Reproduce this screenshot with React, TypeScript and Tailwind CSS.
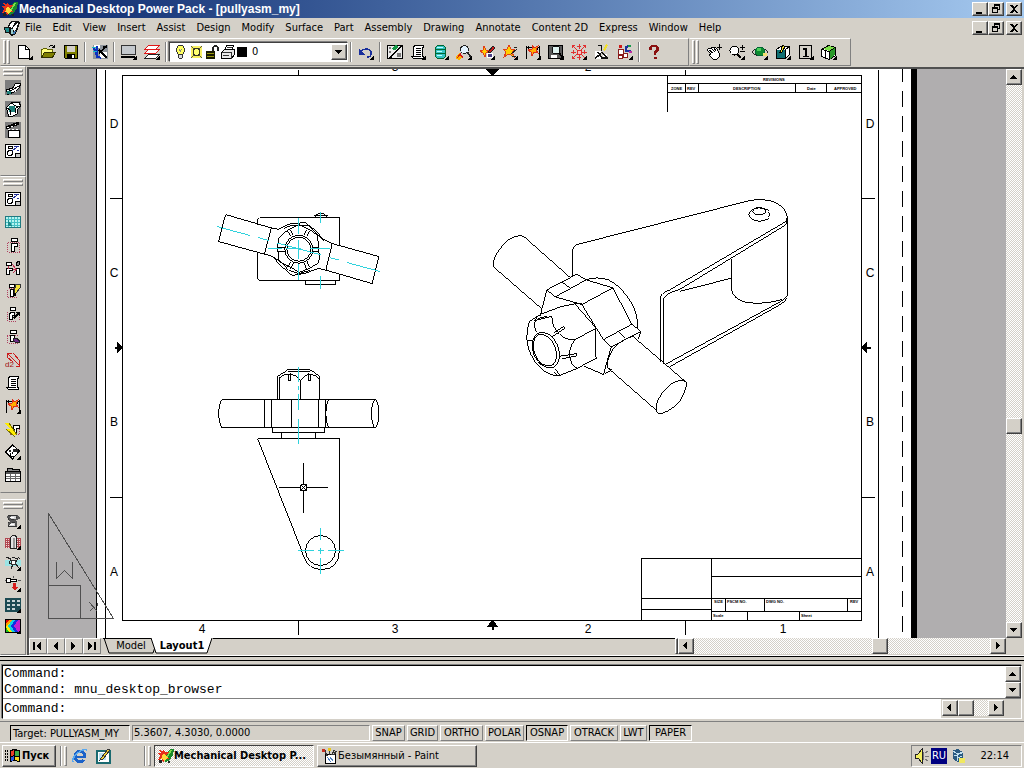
import type { ReactNode } from 'react';
import clsx from 'clsx';

const raised =
  'border border-t-white border-l-white border-r-[#404040] border-b-[#404040] bg-[#d4d0c8] shadow-[inset_-1px_-1px_#808080]';
const sunken = 'border border-t-[#808080] border-l-[#808080] border-r-white border-b-white';
const dither = 'bg-[repeating-conic-gradient(#ffffff_0_25%,#d4d0c8_0_50%)] bg-[length:2px_2px]';

// 16x16 toolbar glyphs
const glyphs: Record<string, ReactNode> = {
  app: (
    <>
      <path d="M8 6l4-5h4l-1 6-4 6-4 1z" fill="#1a8a2a" />
      <path d="M12 2l2 0-4 7-2 1z" fill="#7ce04a" />
      <path d="M1 2l3 1 2-2 1 3 4 0-3 3 3 4-4-1-2 5-1-4-4 1 2-4-2-3 3 0z" fill="#e8301a" />
      <path d="M5 6l2 0 1 2 2 1-2 2-1 3-2-3-2 0 1-2z" fill="#ffd83a" />
      <path d="M1 12h3v3h-3zM10 13h2v2h-2z" fill="#222" />
    </>
  ),
  doc: (
    <>
      <path d="M0 7h4l1-4 3-2h6l2 2-2 6-3 6-4 1-3-3H1z" fill="#111" />
      <path d="M1 8h4v4H2z" fill="#1f8a8a" />
      <path d="M5 7l3-5h3L8 8zM9 8l4-5h1l-2 7-2 1z" fill="#fff" />
      <path d="M7 9h2v5H7z" fill="#9ad0d0" />
      <path d="M10 11l2 0-1 3-2 0z" fill="#3f78b0" />
    </>
  ),
  fresh: (
    <>
      <path d="M1.5 1.5h7l4 4v9h-11z" fill="#fff" stroke="#000" />
      <path d="M8.5 1.5v4h4" fill="none" stroke="#000" />
    </>
  ),
  open: (
    <>
      <path d="M1.5 13.5v-8h1l1-1h3l1 1h5v2" fill="#ffff80" stroke="#606000" />
      <path d="M1.5 13.5l3-5h11l-3 5z" fill="#808000" stroke="#303000" />
      <path d="M8.5 3.5l2-2h2l2 2M14.5 1v3M12 3.5h3" fill="none" stroke="#000" />
    </>
  ),
  save: (
    <>
      <path d="M1.5 1.5h13v13h-12l-1-1z" fill="#808000" stroke="#000" />
      <path d="M4 2h8v6H4z" fill="#d4d0c8" />
      <path d="M4 10h8v4H4z" fill="#000" />
      <path d="M9 11h2v3H9z" fill="#fff" />
    </>
  ),
  snapcut: (
    <>
      <path d="M1 1h15v14H1z" fill="#8f959c" />
      <path d="M2 1h6v3H2zM8 8h7v6H8z" fill="#fff" />
      <path d="M4.5 2v12M2 4l3 8 4 2" fill="none" stroke="#0b2fbf" strokeWidth="2" />
      <path d="M15 2L7 9M7 6l8 8M11 3h4" fill="none" stroke="#000" strokeWidth="1.5" />
      <path d="M0 3.5h4M1 7.5h4" stroke="#14b8c8" />
    </>
  ),
  screen: (
    <>
      <path d="M.5 1.5h14v9H.5z" fill="#c4c8cc" stroke="#333" />
      <path d="M0 12h14v2H0z" fill="#000" />
    </>
  ),
  layers: (
    <>
      <path d="M0.5 14.5l4-4h11l-4 4z" fill="#fff" stroke="#222" />
      <path d="M0.5 9.5l4-4h11l-4 4z" fill="#fff" stroke="#e01818" />
      <path d="M0.5 5.5l4-4h11l-4 4z" fill="#fff" stroke="#e01818" />
    </>
  ),
  undo: (
    <>
      <path d="M3 7.5C7 3 13 5 13 9s-2 4-4 4" fill="none" stroke="#1a2f9c" strokeWidth="1.5" />
      <path d="M1 5v6h6z" fill="#1a2f9c" />
    </>
  ),
  sketch: (
    <>
      <path d="M.5 1.5h15v13H.5z" fill="#ececec" stroke="#000" />
      <path d="M15 1L4 13l-2 1" stroke="#000" strokeWidth="1.5" />
      <path d="M4 5l5-4 3 2-4 3z" fill="#159a48" />
      <path d="M2 3h2v2H2zM2 7h2v2H2zM10 9h4v4h-4z" fill="#777" />
    </>
  ),
  scroll: (
    <>
      <path d="M4.5 1.5h9v2h-1v9h1v2h-10l-2-2h2v-9z" fill="#fff" stroke="#000" />
      <path d="M6 4.5h5M6 6.5h5M6 8.5h5M6 10.5h5M4 12.5h7" stroke="#000" />
    </>
  ),
  data: (
    <>
      <path d="M2.5 3.5l2-2h6l2 2v9l-2 2h-6l-2-2z" fill="#35c4c4" stroke="#063" />
      <path d="M3 5.5h9M3 9.5h9" stroke="#063" />
      <path d="M4 3.5h6M4 7.5h5M4 11.5h5" stroke="#b8ffff" />
    </>
  ),
  find: (
    <>
      <path d="M0 12l4-3 1 3 4 1-4 1-1 2-4-1z" fill="#ffb000" />
      <path d="M1 14l4-5M4 10l3 4" stroke="#d01818" />
      <circle cx="8.5" cy="5.500" r="4" fill="#e4f4ff" stroke="#222" />
      <path d="M11 8l4 5" stroke="#222" strokeWidth="2" />
    </>
  ),
  sparkle: (
    <>
      <path d="M1 7l3-1 1-4 2 4 3 1-3 2-1 4-2-4z" fill="#ffd000" stroke="#e04018" />
      <path d="M9 8l5-6 2 2-5 5z" fill="#d01818" stroke="#222" />
      <path d="M8 9h5v4H8z" fill="#4a3f86" stroke="#fff" />
    </>
  ),
  star: (
    <>
      <path d="M1 5h4l2-4 2 4h4l-3 3 2 5-5-3-5 3 2-5z" fill="#ffd000" stroke="#e04018" />
      <path d="M9 10l6-5M10 12h4M12 3h3" stroke="#222" />
    </>
  ),
  dim: (
    <>
      <path d="M1.5 2v13M14.5 2v11M2 3.5h13M3.5 1.5v4M12.5 1.5v4" stroke="#000" fill="none" />
      <path d="M3 6l4-1 0-4 2 3 4-2-2 4 2 3-4-1-2 4-1-4z" fill="#ffae00" stroke="#e03018" />
    </>
  ),
  plot: (
    <>
      <path d="M.5 1.5h14v13H.5z" fill="#5a5a5a" stroke="#000" />
      <circle cx="8" cy="6" r="4" fill="#dff3f0" stroke="#111" />
      <path d="M3 11h6v3H3z" fill="#fff" />
      <path d="M11 9l4 5" stroke="#000" strokeWidth="2" />
    </>
  ),
  burst: (
    <>
      <path
        d="M8.5 0v5M8.500 11v5M0 8.5h5M11 8.5h5M2 2l4 4M10 10l4 4M14 2l-4 4M6 10l-4 4M6 2.5h4M6 13.5h4M2.5 6v4M13.5 6v4M1 1.5h3M1.5 1v3M12 1.5h3M14.5 1v3M1 14.5h3M1.5 12v3"
        stroke="#e03030"
        fill="none"
      />
      <path d="M6 6h4v4H6z" fill="#f8c0c0" stroke="#e03030" />
    </>
  ),
  axes: (
    <>
      <path d="M1 7h6v8H1zM9 10h4v4H9z" fill="#fff" />
      <path d="M3.5 1.5h4v5M1 14.500l6-5M8 8l5 6H8L4 8" fill="none" stroke="#111" strokeWidth="1.5" />
      <path d="M9 6l3-6 2 1-3 6z" fill="#f0e030" />
    </>
  ),
  blocks: (
    <>
      <path d="M1.5 5.5h5v5h-5zM6.5 9.5h4v4h-4zM1.5 11.5h4v3h-4z" fill="#fff" stroke="#8a1c1c" />
      <path d="M2 1h3v3H2z" fill="#d01818" />
      <path d="M8 5l3-3M9 7h5M9 2v6" stroke="#1a2f9c" strokeWidth="1.5" />
      <path d="M11 1h3v2h-3z" fill="#159a48" />
      <path d="M12 7h3v2h-3z" fill="#c02aa0" />
    </>
  ),
  help: (
    <>
      <path d="M4.5 6V3.5L6 2h4l1.5 1.5v3L9 8.5V11" fill="none" stroke="#8a1010" strokeWidth="2.5" />
      <path d="M7.5 12.5h3V15h-3z" fill="#8a1010" />
    </>
  ),
  pan: (
    <>
      <path d="M1 6l2-2 2 1 1-2 2 1 1-1 2 2 2 4v4l-2 2H7L3 11l2-1z" fill="#fff" stroke="#000" />
      <path d="M3 6l4 3M5 4l4 4M8 4l2 3" stroke="#000" fill="none" />
      <path d="M13.5 0v6M11 3.5h5" stroke="#000" />
    </>
  ),
  zoom: (
    <>
      <circle cx="5.5" cy="6.5" r="4.500" fill="#fff" stroke="#000" />
      <path d="M8 10l4 4" stroke="#000" strokeWidth="2" />
      <path d="M11 3.5h5M13.5 1v5M11 7.5h5" stroke="#000" />
    </>
  ),
  orbit: (
    <>
      <ellipse cx="8" cy="8" rx="7.5" ry="3.5" fill="none" stroke="#222" />
      <circle cx="8" cy="7.5" r="4.5" fill="#0d8a30" stroke="#063" />
      <path d="M5 4h4v3H5z" fill="#4ad05a" />
      <path d="M11 9h4v3h-4z" fill="#f0e070" />
    </>
  ),
  view3d: (
    <>
      <path d="M1.5 5.5l4-3h9v8l-4 4h-9z" fill="#fff" stroke="#000" />
      <path d="M2 6h8v8H2z" fill="#0f6f72" />
      <path d="M10.5 5.5v9M10.5 5.5l4-3" stroke="#000" />
      <path d="M5 8l3-7 2 2-3 5z" fill="#f0e030" stroke="#000" />
    </>
  ),
  one: (
    <>
      <path d="M1.5 1.5h12v13h-12z" fill="#d4d0c8" stroke="#000" />
      <path d="M5 4h4v8h2v1H5v-1h2V6H5z" fill="#000" />
    </>
  ),
  cube: (
    <>
      <path d="M.5 5.5l7-4 7 2v8l-6 4-8-3z" fill="#fff" stroke="#000" />
      <path d="M2 5l6-3 6 2-5 3z" fill="#7cdf4a" />
      <path d="M9 7l5-3v7l-5 4z" fill="#2a9a2a" />
      <path d="M8.5 7.5v8M1 5.5l7 2 6-4M4.500 7v7" stroke="#000" fill="none" />
    </>
  ),
  part: (
    <>
      <path d="M0 0h16v15H0z" fill="#7d7d7d" />
      <path d="M1.5 9.5l6-1 3-5h5l-1 4-4 4-8 3z" fill="#fff" stroke="#000" />
      <path d="M2 11h4v3H2z" fill="#1f7f78" />
      <path d="M7 10l7-4M2 9l5 2" stroke="#000" />
    </>
  ),
  assy: (
    <>
      <path d="M0 0h16v16H0z" fill="#7d7d7d" />
      <path d="M1.5 6.5l5-5h8l1 4-3 3v4l-5 3h-4z" fill="#fff" stroke="#000" />
      <path d="M4 5h6v6H4z" fill="#1f7f78" />
      <path d="M2 7l3 2v5M6 2l5 3h4M10 12V8l4-3" stroke="#000" fill="none" />
    </>
  ),
  scene: (
    <>
      <path d="M0 0h16v16H0z" fill="#7d7d7d" />
      <path d="M3.5 8.5h11v7h-11z" fill="#fff" stroke="#000" />
      <path d="M1 6l13-5" stroke="#000" strokeWidth="3" />
      <path d="M2 6l11-4M3 7.5h12" stroke="#fff" strokeDasharray="2 2" />
    </>
  ),
  drawing: (
    <>
      <path d="M.5 1.5h15v13H.5z" fill="#fff" stroke="#000" />
      <path d="M3.500 3.5h4v2h-4z" fill="none" stroke="#000" />
      <circle cx="5" cy="10" r="2.5" fill="none" stroke="#000" />
      <path d="M7 8l5-4M9 3.5h5M12 7.5h2" stroke="#22309a" />
      <path d="M10.5 10.5h5v4h-5z" fill="#c8c8c8" stroke="#000" />
    </>
  ),
  grid: (
    <>
      <path d="M.5 2.5h15v11H.5z" fill="#b8f4f0" stroke="#207a80" />
      <path d="M3.5 3v10M6.5 3v10M9.5 3v10M12.5 3v10M1 5.5h14M1 8.5h14M1 11.5h14" stroke="#46c0c4" />
      <path d="M3 5v7h4z" fill="#1f8a8a" />
    </>
  ),
  view: (
    <>
      <path d="M2.5 6v9h9M14.5 6v9M3 5.5h12M12 15.5h3" stroke="#b04060" strokeDasharray="1 1" fill="none" />
      <path d="M6.5 1.5h6v3h-6z" fill="#fff" stroke="#000" />
      <path d="M6.5 6.5h6v3h-3v5h-3z" fill="#fff" stroke="#000" />
    </>
  ),
  link: (
    <>
      <path d="M1.5 2.5h5v3h-5zM1.5 8.5h6v2h-3v4h-3zM11.5 8.5h3v6h-3z" fill="#fff" stroke="#000" />
      <path d="M7 4l4 5M4 6l-1 3M8 9h4M8 13l3-3" stroke="#c03050" />
      <path d="M11 4l2-3h2l-1 4h-3z" fill="#888" stroke="#000" />
    </>
  ),
  edit: (
    <>
      <path d="M2.500 7v8M4 5.5h10M3 14.5h10" stroke="#b04060" strokeDasharray="1 1" />
      <path d="M4.5 1.5h5v3h-5zM5.5 6.5h3v7h-3z" fill="#fff" stroke="#000" />
      <path d="M11 1h4v4l-4 5-2 2 0-4z" fill="#f2e23a" stroke="#333" />
      <path d="M9 10h2v3H9z" fill="#000" />
    </>
  ),
  move: (
    <>
      <path d="M2.5 6v9h9M14.5 7v8" stroke="#b04060" strokeDasharray="1 1" fill="none" />
      <path d="M5.5 1.5h5v3h-5zM5.5 6.5h4v3h-2v4h-3v-5z" fill="#fff" stroke="#000" />
      <path d="M8 11l4-4-2-1h5v5l-2-2-4 4z" fill="#000" />
    </>
  ),
  erase: (
    <>
      <path d="M2 6.5h12M2.5 7v7M4 14.5h9" stroke="#b04060" strokeDasharray="1 1" />
      <path d="M5.5 1.5h6v3h-6zM5.5 6.5h4v6h-4z" fill="#fff" stroke="#000" />
      <path d="M8 9h4l3 4-3 1-4-2z" fill="#6a2a86" stroke="#222" />
    </>
  ),
  d2: (
    <>
      <path d="M3 2l11 11M2.500 5V1.500h4M14.500 9v5h-4M8 1l7 8M2 5l6 5" stroke="#cc1c1c" fill="none" />
      <text x="0" y="15" fontSize="8" fill="#a01010" fontFamily="Liberation Sans, sans-serif">
        d2
      </text>
    </>
  ),
  flash: (
    <>
      <path d="M4 5.5h11M14.5 6v8M5 13.5h9" stroke="#b04060" strokeDasharray="1 1" />
      <path d="M8.5 4.5h6v3h-3v4h-2z" fill="#fff" stroke="#000" />
      <path d="M0 2h4l8 12H9l1 2-9-8h4z" fill="#ffec00" />
      <path d="M4 2l8 12M1 8l9 8" stroke="#7a7000" fill="none" />
    </>
  ),
  tag: (
    <>
      <path d="M7.5 1l7 6-7 8-7-7z" fill="#fff" stroke="#000" />
      <path d="M4 6h2v2H4zM8 5h5v3H8z" fill="#222" />
      <path d="M5 9l1 3h3M8 8l-1 2" stroke="#000" fill="none" />
    </>
  ),
  table: (
    <>
      <path d="M2 1.5h5l1 1h6v3H2z" fill="#888" stroke="#000" />
      <path d="M.5 4.5h15v10H.5z" fill="#fff" stroke="#000" />
      <path d="M1 5h14v2H1z" fill="#555" />
      <path d="M1 9.5h14M1 11.5h14M5.5 7v7M10.5 7v7" stroke="#666" />
    </>
  ),
  spring: (
    <>
      <path d="M3.5 2.5h8v4h-8zM3.5 9.5h8v4h-8z" fill="#d8d8d8" stroke="#333" />
      <path d="M2 4h3v3l6 2v4M12 3l2 2-8 4-3 3" stroke="#555" fill="none" strokeWidth="1.5" />
      <path d="M5 4.500h4M5 11.500h4" stroke="#fff" />
    </>
  ),
  shaft: (
    <>
      <path d="M0 4h5v10H0zM11 4h5v10h-5z" fill="#b04850" />
      <path d="M1.500 5v9M3.500 5v9M12.500 5v9M14.500 5v9" stroke="#f0d8d8" strokeDasharray="1 1" />
      <path d="M5.5 3.5l2-2h3l1 2v11h-6z" fill="#e4e4e4" stroke="#222" />
      <path d="M8.5 4v10" stroke="#999" strokeWidth="2" />
    </>
  ),
  spline: (
    <>
      <path d="M0 5h16v6H0z" fill="#9ce4e4" />
      <path d="M1 2l5 2-2 4 4 1-2 5M7 2l6 2-3 4 4 5M13 2l2 2" stroke="#222" fill="none" />
      <path d="M6 5h4v4H6z" fill="#fff" stroke="#333" />
    </>
  ),
  screw: (
    <>
      <path d="M1.5 2.5h4v4h-4z" fill="#fff" stroke="#000" />
      <path d="M5.500 3.5h6v2h-6z" fill="#fff" stroke="#000" />
      <path d="M0 4.5h1M13 4.5h3M8.500 0v2" stroke="#555" />
      <path d="M8 7h3v4h2l-3 4-4-4h2z" fill="#d81c1c" />
    </>
  ),
  keys: (
    <>
      <path d="M0 1h16v14H0z" fill="#1c4a52" />
      <path d="M2 3h3v2H2zM7 3h3v2H7zM12 3h3v2h-3zM2 7h3v2H2zM7 7h3v2H7zM12 7h3v2h-3zM2 11h3v2H2zM7 11h3v2H7z" fill="#c8d4d4" />
    </>
  ),
  colors: (
    <>
      <path d="M0 1h16v14H0z" fill="#000" />
      <path d="M1 2h3L1 6z" fill="#e00000" />
      <path d="M4 2h3L1 9V6z" fill="#ff9c00" />
      <path d="M1 9l3-4 0 9H1z" fill="#20c020" />
      <path d="M7 2L3 8l4 6H4L1 9z" fill="#ffee00" />
      <path d="M10 2L6 8l4 6H7L3 8l4-6z" fill="#10d0e0" />
      <path d="M13 2L9 8l4 6h-3L6 8l4-6z" fill="#1030e0" />
      <path d="M15 2v12h-2L9 8l4-6z" fill="#c020d0" />
    </>
  ),
  bulb: (
    <>
      <path d="M4.500 4.500l2-3h4l2 3v3l-2 3h-4l-2-3z" fill="#ffff60" stroke="#333" />
      <path d="M6.5 10.5h4v3l-1 1h-2l-1-1z" fill="#ddd" stroke="#333" />
      <path d="M7 5l1.500 2L10 5" stroke="#887" fill="none" />
    </>
  ),
  sun: (
    <>
      <path d="M3 2h11v12H3z" fill="#f8f060" />
      <path d="M3 2l3 3M14 2l-3 3M3 14l3-3M14 14l-3-3" stroke="#554" />
      <circle cx="8.500" cy="8" r="3.500" fill="#ffff70" stroke="#332" />
    </>
  ),
  lock: (
    <>
      <path d="M9 7V3.5l2-2h1l2 2V7" fill="none" stroke="#222" strokeWidth="2" />
      <path d="M2 7h9v8H2z" fill="#1a1a00" />
      <path d="M3 9.5h7M3 12.5h7" stroke="#9a9a10" />
    </>
  ),
  print: (
    <>
      <path d="M4.5 6.5l2-5h7l-2 5z" fill="#fff" stroke="#000" />
      <path d="M1.5 8.5l3-3h10v5l-3 4h-10z" fill="#e8e8e8" stroke="#000" />
      <path d="M2 8.5h9v6M3 11.5h6M7 3.5h5" stroke="#333" fill="none" />
    </>
  ),
  ie: (
    <>
      <circle cx="8" cy="8.5" r="5" fill="none" stroke="#1c62c8" strokeWidth="3" />
      <path d="M4 8.5h9" stroke="#1c62c8" strokeWidth="2" />
      <path d="M11 10h5v2h-5z" fill="#d4d0c8" />
      <path d="M1 14C-1 10 9 0 15 2" fill="none" stroke="#58a8f0" strokeWidth="1.5" />
    </>
  ),
  desk: (
    <>
      <path d="M1.5 2.5h13v12h-13z" fill="#fff" stroke="#1a6a70" strokeWidth="2" />
      <path d="M4 5h7v7H4z" fill="#b8e0f0" />
      <path d="M6 10l7-9 2 1-7 9-3 1z" fill="#f0d030" stroke="#333" />
    </>
  ),
  flag: (
    <>
      <path d="M0 3h4M0 6h4M0 9h4M0 12h4" stroke="#000" strokeDasharray="1 1" strokeWidth="2" />
      <path d="M5 2l4-1 6 1v12l-6-1-4 1z" fill="#000" />
      <path d="M6 3l3-1v5L6 8z" fill="#e8402a" />
      <path d="M10 3l4 0v5h-4z" fill="#38b048" />
      <path d="M6 9l3-1v4l-3 1z" fill="#2a5ae0" />
      <path d="M10 9h4v4l-4-1z" fill="#f4d820" />
    </>
  ),
  paint: (
    <>
      <path d="M4.5 6.5h10v9h-10z" fill="#fff" stroke="#000" />
      <path d="M2 2l2 1 2 5M8.500 1v6M13 2l-2 5M15 3l-2 4" stroke="#333" fill="none" strokeWidth="1.5" />
      <path d="M1 1h3v3H1z" fill="#c83020" />
      <path d="M7 0h3v3H7z" fill="#e8c820" />
      <path d="M6 9l4 5M9 9l3 4" stroke="#5080c0" />
    </>
  ),
  sound: (
    <>
      <path d="M1 6h3l4-5v14L4 10H1z" fill="#f4f060" stroke="#222" />
      <path d="M11 5l3-2M11 8.500h4M11 11l3 2M9.500 4v8" stroke="#777" />
    </>
  ),
  tray: (
    <>
      <path d="M3 2l5-1 5 3v6l-5 4-5-3z" fill="#2a5a80" />
      <path d="M3 3l4 3 6-2M7 6v7M4 8l8-3M8 10l4-2" stroke="#c0e0f0" fill="none" />
      <path d="M9 10h6v5H9z" fill="#f0e860" />
    </>
  ),
};

function Glyph({ name, fly }: { name: string; fly?: boolean }) {
  return (
    <svg viewBox="0 0 16 16" className="h-4 w-4 shrink-0" shapeRendering="crispEdges" aria-hidden>
      {glyphs[name]}
      {fly && <path d="M16 11v5h-5z" fill="#000" />}
    </svg>
  );
}

function Tool({ name, fly, tall }: { name: string; fly?: boolean; tall?: boolean }) {
  return (
    <button
      type="button"
      aria-label={name}
      className={clsx('flex w-[23px] shrink-0 items-center justify-center', tall ? 'h-[23px]' : 'h-[21px]')}
    >
      <Glyph name={name} fly={fly} />
    </button>
  );
}

function Sep() {
  return <div className="mx-[2px] h-5 w-[2px] border-l border-l-[#808080] border-r border-r-white" />;
}

const bar = 'border border-t-white border-l-white border-r-[#808080] border-b-[#808080]';

function Grip({ flat }: { flat?: boolean }) {
  return (
    <div className={clsx('flex shrink-0', flat ? 'h-2 flex-col gap-px px-[2px]' : 'h-6 w-3 gap-px pl-[2px]')}>
      <div className={clsx(bar, flat ? 'h-[3px]' : 'w-[3px]')} />
      <div className={clsx(bar, flat ? 'h-[3px]' : 'w-[3px]')} />
    </div>
  );
}

const arrows = {
  up: 'M3 9h7L6.5 5z',
  down: 'M3 5h7L6.5 9z',
  left: 'M8 3v7L4 6.5z',
  right: 'M5 3v7l4-3.5z',
};

function ArrowButton({ dir }: { dir: keyof typeof arrows }) {
  return (
    <button type="button" aria-label={`Scroll ${dir}`} className={clsx('h-4 w-4 shrink-0', raised)}>
      <svg viewBox="0 0 14 14" className="h-full w-full" shapeRendering="crispEdges">
        <path d={arrows[dir]} />
      </svg>
    </button>
  );
}

function WindowButtons() {
  const shapes = [
    'M3 9h6v2H3z',
    'M5 1h6v6H9V6h1V3H6v1H5zM3 4h6v6H3zM4 6v3h4V6z',
    'M3 2h2l2 2 2-2h2L8 6l3 4H9L7 8l-2 2H3l3-4z',
  ];
  return (
    <div className="ml-auto flex pr-[2px]">
      {shapes.map((d, i) => (
        <button
          key={d}
          type="button"
          aria-label={['Minimize', 'Restore', 'Close'][i]}
          className={clsx('h-[14px] w-4', raised, i === 2 && 'ml-[2px]')}
        >
          <svg viewBox="0 0 14 12" className="h-full w-full" shapeRendering="crispEdges">
            <path d={d} fillRule="evenodd" />
          </svg>
        </button>
      ))}
    </div>
  );
}

const menus = [
  'File', 'Edit', 'View', 'Insert', 'Assist', 'Design', 'Modify', 'Surface', 'Part', 'Assembly',
  'Drawing', 'Annotate', 'Content 2D', 'Express', 'Window', 'Help',
];

function TopBars() {
  return (
    <header className="shrink-0">
      <div className="flex h-[18px] items-center bg-linear-to-r from-[#0a246a] to-[#a6caf0] pl-[2px]">
        <Glyph name="app" />
        <h1 className="ml-px text-[12px] leading-4 font-bold whitespace-nowrap text-white font-['Liberation_Sans',sans-serif]">
          Mechanical Desktop Power Pack - [pullyasm_my]
        </h1>
        <WindowButtons />
      </div>
      <div className="flex h-5 items-center pl-1">
        <Glyph name="doc" />
        <nav className="ml-[5px] flex gap-[11px]">
          {menus.map((m) => (
            <button key={m} type="button" className="whitespace-nowrap">
              {m}
            </button>
          ))}
        </nav>
        <WindowButtons />
      </div>
      <div className="flex h-7">
        <div className="flex w-[689px] items-center border border-t-white border-l-transparent border-r-[#808080] border-b-[#808080]">
          <Grip />
          <Tool name="fresh" fly />
          <Tool name="open" />
          <Tool name="save" />
          <Sep />
          <Tool name="snapcut" />
          <Sep />
          <Tool name="screen" fly />
          <Tool name="layers" fly />
          <Sep />
          <div className="flex h-5 w-[179px] items-center border border-t-[#404040] border-l-[#404040] border-r-white border-b-white bg-white pl-[2px] shadow-[-1px_-1px_#808080]">
            <Glyph name="bulb" />
            <Glyph name="sun" />
            <Glyph name="lock" />
            <Glyph name="print" />
            <span className="mx-px h-[10px] w-[10px] bg-black" />
            <select aria-label="Layer" className="ml-1 min-w-0 flex-1 appearance-none bg-transparent">
              <option>0</option>
            </select>
            <ArrowButton dir="down" />
          </div>
          <Sep />
          <Tool name="undo" fly />
          <Sep />
          <Tool name="sketch" />
          <Tool name="scroll" fly />
          <Tool name="data" fly />
          <Tool name="find" fly />
          <Tool name="sparkle" fly />
          <Tool name="star" fly />
          <Tool name="dim" fly />
          <Tool name="plot" fly />
          <Tool name="burst" fly />
          <Tool name="axes" />
          <Tool name="blocks" fly />
          <Sep />
          <Tool name="help" />
        </div>
        <div className="flex w-[162px] items-center border border-t-white border-l-transparent border-r-[#808080] border-b-[#808080]">
          <Grip />
          <Tool name="pan" />
          <Tool name="zoom" fly />
          <Tool name="orbit" fly />
          <Tool name="view3d" fly />
          <Tool name="one" fly />
          <Tool name="cube" fly />
        </div>
      </div>
    </header>
  );
}

function SideBars() {
  const band = 'border border-t-white border-l-transparent border-r-[#808080] border-b-[#808080] pt-[2px]';
  return (
    <aside className="flex w-[26px] shrink-0 flex-col overflow-hidden">
      <div className={clsx(band, 'h-[110px] shrink-0')}>
        <Grip flat />
        {['part', 'assy', 'scene', 'drawing'].map((n) => (
          <Tool key={n} name={n} />
        ))}
      </div>
      <div className={clsx(band, 'h-[317px] shrink-0')}>
        <Grip flat />
        {['drawing', 'grid', 'view', 'link', 'edit', 'move', 'erase', 'd2', 'scroll'].map((n) => (
          <Tool key={n} name={n} tall />
        ))}
        <Tool name="dim" fly tall />
        <Tool name="flash" tall />
        <Tool name="tag" fly tall />
        <Tool name="table" tall />
      </div>
      <div className={clsx(band, 'mt-[6px] flex-1')}>
        <Grip flat />
        {['spring', 'shaft', 'spline', 'screw', 'keys', 'colors'].map((n) => (
          <Tool key={n} name={n} fly />
        ))}
      </div>
    </aside>
  );
}

function Sheet() {
  return (
    <g transform="translate(.5 .5)" stroke="#000" fill="none">
      <path d="M105 69V640M878 69V640M122 75H861V620H122Z" />
      <path d="M109 198H122M109 497H122M861 198H874M861 497H874M298 69V75M685 69V75M298 620V634M685 620V634" />
      <path d="M902 65V640" strokeDasharray="16 9" />
      <path d="M114 347H122M862 347H870M492 620V629" strokeWidth="2" />
      <path d="M117 342L122 347L117 352ZM866 342L861 347L866 352ZM486 69H498L492 75ZM487 626L492 620L497 626Z" fill="#000" />
      {/* revision table */}
      <path d="M667 75V111M667 83H861M667 92H861M685 83V92M698 83V92M795 83V92M826 83V92" />
      {/* title block */}
      <path d="M641 620V558H861M711 558V620M711 576H861M641 598H861M641 609H711M711 611H861M725 598V611M764 598V611M847 598V611M747 611V620M799 611V620" />
    </g>
  );
}

const zones: [string, number, number][] = [
  ['D', 114, 128], ['C', 114, 277], ['B', 114, 426], ['A', 114, 576],
  ['D', 870, 128], ['C', 870, 277], ['B', 870, 426], ['A', 870, 576],
  ['4', 202, 633], ['3', 395, 633], ['2', 588, 633], ['1', 783, 633],
  ['3', 395, 71], ['2', 588, 71],
];

const cells: [string, number, number][] = [
  ['REVISIONS', 763, 81], ['ZONE', 671, 90], ['REV', 687, 90], ['DESCRIPTION', 733, 90],
  ['Date', 807, 90], ['APPROVED', 834, 90], ['SIZE', 714, 603], ['FSCM NO.', 727, 603],
  ['DWG NO.', 766, 603], ['REV', 850, 603], ['Scale', 713, 617], ['Sheet', 801, 617],
];

function Drawing() {
  return (
    <svg
      viewBox="29 69 977 569"
      preserveAspectRatio="xMidYMid slice"
      className="absolute inset-0 h-full w-full bg-[#b0aeaf]"
      shapeRendering="crispEdges"
      role="img"
      aria-label="Layout1"
    >
      <path d="M97 60H911V640H97Z" fill="#fff" />
      <path d="M96 60H97V640H96ZM911 60H917V640H911Z" />
      <Sheet />
      <g fontSize="12" textAnchor="middle" fontFamily="Liberation Sans, sans-serif">
        {zones.map(([t, x, y]) => (
          <text key={`${t}${x}${y}`} x={x} y={y}>
            {t}
          </text>
        ))}
      </g>
      <g fontSize="4" fontWeight="bold" fontFamily="Liberation Sans, sans-serif">
        {cells.map(([t, x, y]) => (
          <text key={`${t}${x}`} x={x} y={y}>
            {t}
          </text>
        ))}
      </g>

      {/* paper space UCS icon */}
      <g transform="translate(.5 .5)" stroke="#505050" fill="none">
        <path d="M48 513V618H113ZM48 585H80V618M56 561V578L64 570L72 578V561M89 602L97 611M89 611L93 607M97 602V605" />
      </g>

      {/* top view */}
      <g transform="translate(200.2 190.2) scale(.33333)" stroke="#000" fill="none" strokeWidth="3">
        <path d="M172 103V88L178 82H418V166M172 187V266L178 271H418V253M316 271V283H406V271M342 82L350 72L358 70H370L378 76L382 82M342 76H382" />
        <path d="M213 113L76 73L55 154L193 192ZM396 160L536 199L516 280L377 240Z" />
        <path d="M213 113L235 117L265 102L315 97L345 120L370 148L396 160M193 192L216 198L240 225L276 256L315 249L355 235L377 240" />
        <path d="M250 115L275 105H300L325 106L350 130L372 152M216 198L245 218L265 240L297 250L330 240" />
        <path d="M297 103L262 120L235 143L232 175L237 214L265 228L297 246L325 236L352 220L358 207L355 170L352 135L328 118Z" />
        <circle cx="296" cy="177" r="42" />
        <circle cx="296" cy="177" r="36" />
        <path d="M262 122L272 137M270 118L278 133M320 118L312 133M328 122L320 137M234 172H254M234 184H254M338 172H356M338 184H356M262 230L272 215M272 235L280 218M318 235L312 218M328 230L320 213" />
        <g stroke="#2fd2dc">
          <path d="M50 109L150 136M173 142L205 151M230 158L362 194M388 202L417 210M440 217L540 244" />
          <path d="M295 82V130M295 150V205M295 220V268M202 175H246M258 175H286M292 175H302M330 175H390M361 66V98M361 258V296" />
        </g>
      </g>

      {/* front view */}
      <g transform="translate(200.2 360.2) scale(.33333)" stroke="#000" fill="none" strokeWidth="3">
        <path d="M232 118V48L250 38L262 29H328L345 38L358 50V118M238 50V118M301 58V118M262 34H328" />
        <path d="M235 55Q252 40 265 42Q290 42 301 62Q312 42 332 42Q350 44 358 58M265 42V61H271V38M325 38V61H331V42" />
        <path d="M64 118H526M64 202H526M64 118Q46 160 64 202M193 118V202M214 118V202M274 118V202M355 118V202M376 118V202M385 118Q376 135 377 160Q376 185 385 202" />
        <ellipse cx="525" cy="160" rx="11" ry="42" />
        <path d="M217 202V217H373V202M244 217V235M346 217V235M172 235H418V571Q415 628 364 628Q325 628 310 588L301 562Z" />
        <circle cx="361" cy="571" r="45" />
        <g stroke="#2fd2dc">
          <path d="M295 20V66M295 76V90M295 100V150M295 175V250M361 504V540M361 562V580M361 594V640M294 571H340M354 571H370M384 571H432" />
        </g>
        <path d="M310 309V372M310 391V459M235 382H301M319 382H384M301 373H319V391H301ZM301 373L319 391M319 373L301 391" />
      </g>

      {/* isometric view */}
      <g transform="translate(480.2 190.2) scale(.33333)" stroke="#000" fill="none" strokeWidth="3">
        {/* bracket */}
        <path d="M277 256V184Q277 168 290 163L805 32Q850 22 888 38Q921 58 921 82Q921 94 905 101L567 300Q541 308 540 325V514" />
        <path d="M921 92Q918 106 902 113L600 297L575 306Q551 314 550 330V520M921 82V316Q918 326 890 340L555 523M921 322Q916 335 895 346L570 529" />
        <path d="M754 205V297Q758 328 800 337Q850 344 905 328M600 303L754 264" />
        <ellipse cx="837" cy="73" rx="31" ry="20" />
        <ellipse cx="837" cy="63" rx="19" ry="11" />
        {/* rod */}
        <path d="M270 262L130 138Q112 132 82 150Q40 195 40 215V230L185 356" />
        <path d="M455 436L618 576M383 533L528 660M395 540L383 533Q377 515 397 478Q420 448 460 438" />
        <path d="M618 576Q620 600 598 634Q562 671 534 671Q522 655 534 628Q556 586 590 573Q608 568 618 576Z" />
        {/* hub */}
        <path d="M200 299L290 252L318 269L225 320ZM245 276L270 293M200 299L185 356L180 378M225 320L305 343L398 293L318 269" />
        <path d="M305 343L346 410L370 448L455 402L398 293M455 402L482 424L393 470L370 448M393 470L383 505L370 553L310 527M375 550L393 541M482 424L475 445M418 426L436 444" />
        <path d="M318 269Q350 258 383 268Q425 288 455 340Q475 380 472 412" />
        {/* castle nut */}
        <path d="M150 392L182 372L240 350L284 341H305M284 341L346 412V500L350 503L290 535L235 557Q195 556 165 515Q138 475 140 440Q142 405 150 392" />
        <path d="M160 392L215 378Q214 410 238 432Q255 450 285 448L348 414M285 448Q262 475 270 505Q275 530 292 534M170 380Q158 400 168 425M172 385L200 378" />
        <ellipse cx="197" cy="480" rx="38" ry="56" transform="rotate(-22 197 480)" />
        <ellipse cx="194" cy="480" rx="32" ry="50" transform="rotate(-22 194 480)" />
        <path d="M215 440L255 414L250 409L222 428M240 498L290 490V497L244 506M140 452H154M225 536L240 557M222 545L232 557M175 515L182 525" />
      </g>
    </svg>
  );
}

function LayoutTabs() {
  const nav = ['M3 4v8h2V4zM11 4v8L6 8z', 'M10 4v8L5 8z', 'M5 4v8l5-4z', 'M4 4v8l5-4zM10 4v8h2V4z'];
  return (
    <div className="flex h-[17px] shrink-0">
      <div className="flex flex-1 items-start overflow-hidden">
        {nav.map((d, i) => (
          <button
            key={d}
            type="button"
            aria-label={['First', 'Previous', 'Next', 'Last'][i]}
            className="flex h-4 w-[18px] items-center border border-t-white border-l-white border-r-[#808080] border-b-[#808080]"
          >
            <svg viewBox="0 1 16 14" className="h-[14px] w-4" shapeRendering="crispEdges">
              <path d={d} />
            </svg>
          </button>
        ))}
        <button type="button" className="relative z-0 ml-[2px] h-4 w-[56px] text-center">
          <svg viewBox="0 0 56 16" className="absolute inset-0 -z-10 h-full w-full">
            <path d="M1 0l5 15h44l5-15" fill="#d4d0c8" stroke="#000" />
            <path d="M0 .5h56" stroke="#000" />
          </svg>
          Model
        </button>
        <button type="button" className="relative z-0 -ml-2 h-4 w-[62px] text-center font-bold">
          <svg viewBox="0 0 62 16" className="absolute inset-0 -z-10 h-full w-full">
            <path d="M0 0l5 15h51l5-15" fill="#fff" stroke="#000" />
          </svg>
          Layout1
        </button>
        <div className="h-px flex-1 bg-black" />
      </div>
      <div className="flex w-[349px] items-start">
        <div className={clsx('h-4 w-[3px]', raised)} />
        <ArrowButton dir="left" />
        <div className={clsx('flex h-4 flex-1 justify-end pr-[102px]', dither)}>
          <div className={clsx('h-4 w-4', raised)} />
        </div>
        <ArrowButton dir="right" />
        <div className="w-[18px]" />
      </div>
    </div>
  );
}

function Workspace() {
  return (
    <div className="flex min-h-0 flex-1">
      <SideBars />
      <main className="mt-px ml-px flex min-w-0 flex-1 flex-col border-t-2 border-l-2 border-[#505050]">
        <div className="flex min-h-0 flex-1">
          <div className="relative flex-1 overflow-hidden">
            <Drawing />
          </div>
          <div className={clsx('flex w-4 flex-col', dither)}>
            <ArrowButton dir="up" />
            <div className="flex flex-1 flex-col justify-end pb-[188px]">
              <div className={clsx('h-4 w-4', raised)} />
            </div>
            <ArrowButton dir="down" />
          </div>
          <div className="w-[2px]" />
        </div>
        <LayoutTabs />
      </main>
    </div>
  );
}

function CommandWindow() {
  return (
    <section className="shrink-0 border-t border-t-white">
      <div className="h-[5px] border-t border-b border-black" />
      <div className="px-[2px] pt-1">
        <div className="flex h-[54px] flex-col border border-t-black border-l-black border-r-white border-b-white shadow-[-1px_-1px_#808080] font-['Liberation_Mono',monospace] text-[13px] leading-4">
          <div className="flex h-8 shrink-0">
            <div className="flex-1 bg-white pl-px">
              <p>Command:</p>
              <p>Command: mnu_desktop_browser</p>
            </div>
            <div className="flex flex-col">
              <ArrowButton dir="up" />
              <ArrowButton dir="down" />
            </div>
          </div>
          <div className="flex flex-1 border-t border-t-[#808080]">
            <label htmlFor="command" className="bg-white pt-[2px] pl-px">
              Command:
            </label>
            <input id="command" className="min-w-0 flex-1 bg-white pl-2 outline-none" />
            <div className="flex w-20 pt-px pl-px">
              <ArrowButton dir="left" />
              <div className={clsx('h-4 w-4', raised)} />
              <div className={clsx('h-4 w-[14px]', dither)} />
              <ArrowButton dir="right" />
            </div>
          </div>
        </div>
      </div>
    </section>
  );
}

const modes = [
  { label: 'SNAP', width: 'w-[33px]' },
  { label: 'GRID', width: 'w-[31px]' },
  { label: 'ORTHO', width: 'w-[43px]' },
  { label: 'POLAR', width: 'w-[39px]' },
  { label: 'OSNAP', width: 'w-[42px]', on: true },
  { label: 'OTRACK', width: 'w-[48px]' },
  { label: 'LWT', width: 'w-[27px]' },
  { label: 'PAPER', width: 'w-[43px]', on: true },
];

function StatusBar() {
  return (
    <div className="mt-[2px] flex h-[21px] shrink-0 items-center gap-[2px] border-t border-t-[#808080] pt-px pl-[10px]">
      <div className="h-4 w-[120px] overflow-hidden border border-t-black border-l-black border-r-white border-b-white pl-[2px] leading-4 whitespace-nowrap">
        Target: PULLYASM_MY
      </div>
      <div className={clsx('h-4 w-[238px] pl-px leading-[14px]', sunken)}>5.3607, 4.3030, 0.0000</div>
      <div className="flex gap-[2px]">
        {modes.map((m) => (
          <button
            key={m.label}
            type="button"
            aria-pressed={!!m.on}
            className={clsx(
              'flex h-4 items-center justify-center border text-[11px]',
              m.width,
              m.on
                ? 'border-t-black border-l-black border-r-white border-b-white pt-px'
                : 'border-t-white border-l-white border-r-[#808080] border-b-[#808080]',
            )}
          >
            {m.label}
          </button>
        ))}
      </div>
    </div>
  );
}

function TaskBar() {
  return (
    <footer className="flex h-[26px] shrink-0 items-center border-t border-t-white pl-[2px]">
      <button type="button" className={clsx('flex h-[22px] w-[54px] items-center gap-px pl-[2px] font-bold', raised)}>
        <Glyph name="flag" />
        Пуск
      </button>
      <div className="ml-[2px] flex">
        <Sep />
        <div className={clsx('mr-[5px] h-5 w-[3px]', bar)} />
        <button type="button" aria-label="Internet Explorer">
          <Glyph name="ie" />
        </button>
        <button type="button" aria-label="Desktop" className="ml-[7px]">
          <Glyph name="desk" />
        </button>
      </div>
      <div className="ml-[31px] flex">
        <Sep />
        <div className={clsx('mr-[3px] h-5 w-[3px]', bar)} />
      </div>
      <button
        type="button"
        className={clsx(
          'flex h-[22px] w-[160px] items-center border border-t-[#404040] border-l-[#404040] border-r-white border-b-white pt-px pl-[3px] font-bold whitespace-nowrap',
          dither,
        )}
      >
        <Glyph name="app" />
        Mechanical Desktop P...
      </button>
      <button type="button" className={clsx('ml-[3px] flex h-[22px] w-[160px] items-center gap-px pl-[3px] whitespace-nowrap', raised)}>
        <Glyph name="paint" />
        Безымянный - Paint
      </button>
      <div className={clsx('mr-[2px] ml-auto flex h-[22px] w-[111px] items-center pl-[2px]', sunken)}>
        <Glyph name="sound" />
        <span className="ml-px h-4 w-4 bg-[#000080] text-center leading-4 text-white">RU</span>
        <span className="ml-[3px] flex">
          <Glyph name="tray" />
        </span>
        <time className="ml-auto pr-3">22:14</time>
      </div>
    </footer>
  );
}

export default function App() {
  return (
    <div className="flex h-screen flex-col overflow-hidden bg-[#d4d0c8] text-[11px] leading-[14px] text-black font-['DejaVu_Sans_Condensed','DejaVu_Sans',sans-serif]">
      <TopBars />
      <Workspace />
      <CommandWindow />
      <StatusBar />
      <TaskBar />
    </div>
  );
}
